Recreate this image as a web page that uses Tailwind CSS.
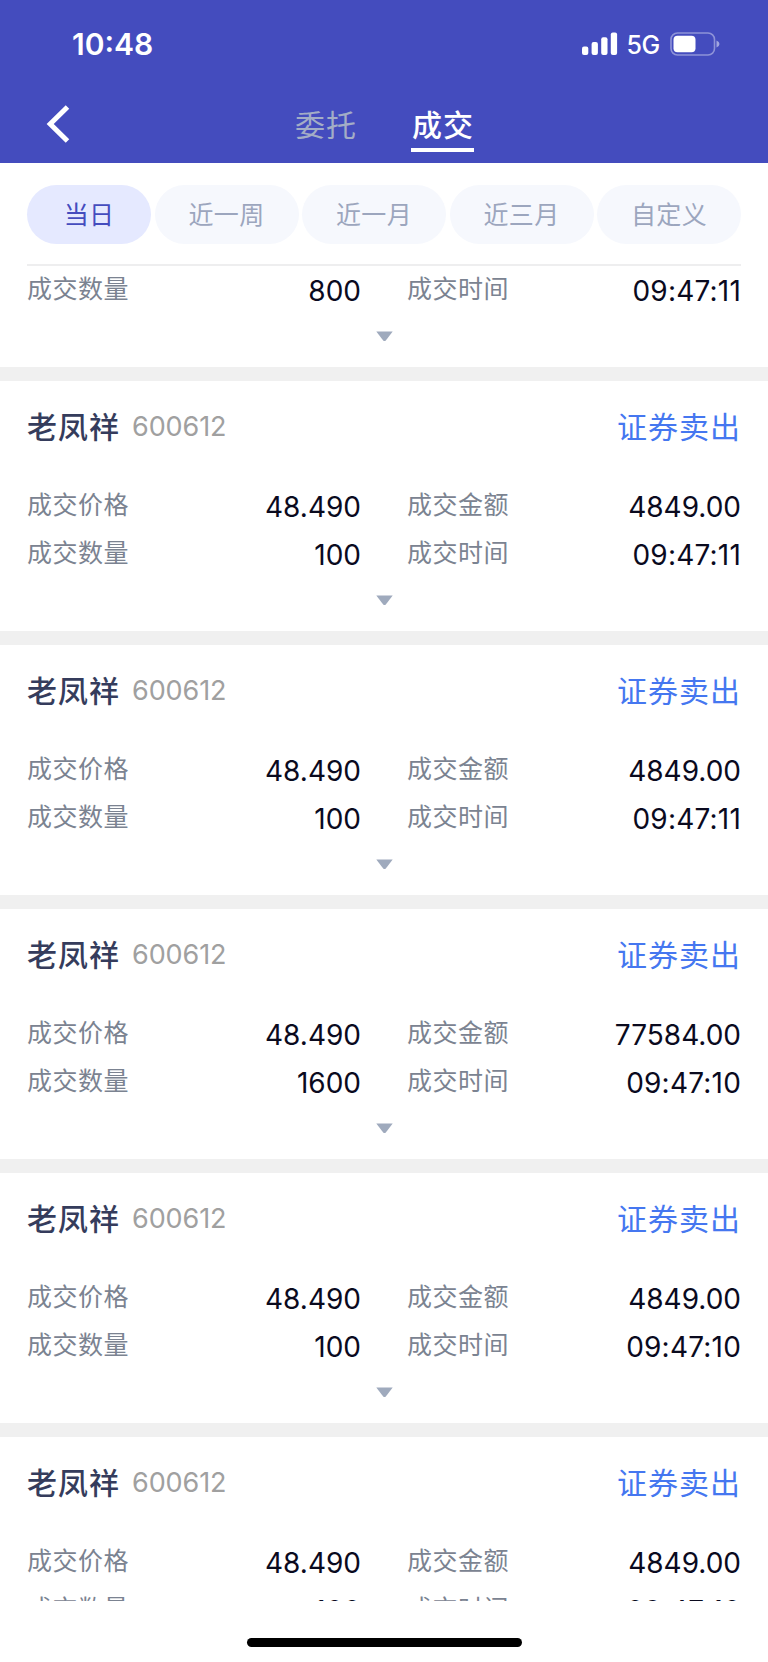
<!DOCTYPE html>
<html lang="zh-CN">
<head>
<meta charset="utf-8">
<title>成交</title>
<script src="https://cdn.jsdelivr.net/npm/@tailwindcss/browser@4"></script>
</head>
<body class="bg-white">
<div class="flex h-[1662px] w-[768px] flex-col overflow-hidden bg-white font-['Inter','Noto_Sans_CJK_SC',sans-serif]">
  <header class="h-[163px] shrink-0 bg-[#444cbe] text-white">
    <div class="flex h-[87px] items-center pl-[72px] pr-[48px]">
      <span class="text-[30px] font-semibold leading-none">10:48</span>
      <svg class="ml-auto" width="36" height="24" viewBox="0 0 36 24" fill="#fff"><rect x="0" y="14.5" width="6.3" height="8.5" rx="2"/><rect x="9.6" y="10" width="6.3" height="13" rx="2"/><rect x="19.2" y="5.2" width="6.3" height="17.8" rx="2"/><rect x="28.8" y="0.4" width="6.3" height="22.6" rx="2"/></svg>
      <span class="ml-[8px] mt-[3px] text-[25px] font-medium leading-none tracking-[-0.3px]">5G</span>
      <svg class="ml-[10px]" width="50" height="24" viewBox="0 0 50 24"><rect x="1" y="1" width="43.5" height="22" rx="6.5" fill="none" stroke="#fff" stroke-opacity=".4" stroke-width="1.6"/><rect x="3.5" y="3.7" width="22" height="16.6" rx="4" fill="#fff"/><path d="M46.5 8.5q3 1.2 3 3.5t-3 3.5z" fill="#fff" fill-opacity=".5"/></svg>
    </div>
    <nav class="flex h-[76px] items-start text-[30px] leading-[44px]">
      <svg class="ml-[46px] mt-[17px]" width="24" height="40" viewBox="0 0 24 40" fill="none" stroke="#fff" stroke-width="5"><path d="M21.5 3L4.2 20 21.5 37"/></svg>
      <span class="ml-[225px] mt-[16px] tracking-[1px] text-[#a3adc6]">委托</span>
      <span class="ml-[54px] mt-[16px] h-[49px] w-[63px] border-b-[4px] border-white pl-[1px] font-medium tracking-[1px]">成交</span>
    </nav>
  </header>
  <div class="mx-[27px] flex h-[103px] shrink-0 justify-between border-b-2 border-[#eeeeef] pt-[22px] text-[25px] text-[#9ca6be]">
    <span class="flex h-[59px] w-[124px] items-center justify-center rounded-full bg-[#e5e9ff] pt-[2px] tracking-[0.3px] text-[#444cbe]">当日</span>
    <span class="flex h-[59px] w-[144px] items-center justify-center rounded-full bg-[#f6f8fd] pt-[2px] tracking-[0.3px]">近一周</span>
    <span class="flex h-[59px] w-[144px] items-center justify-center rounded-full bg-[#f6f8fd] pt-[2px] tracking-[0.3px]">近一月</span>
    <span class="flex h-[59px] w-[144px] items-center justify-center rounded-full bg-[#f6f8fd] pt-[2px] tracking-[0.3px]">近三月</span>
    <span class="flex h-[59px] w-[144px] items-center justify-center rounded-full bg-[#f6f8fd] pt-[2px] tracking-[0.3px]">自定义</span>
  </div>
  <main id="list" class="h-[1335px] shrink-0 overflow-hidden"></main>
  <div class="flex grow justify-center pt-[37px]"><div class="h-[9px] w-[275px] rounded-full bg-black"></div></div>
</div>
<script>
const row = (a, b, c, d) => `
  <div class="flex h-12 items-center px-[27px]">
    <span class="w-[130px] text-[25px] leading-[48px] tracking-[0.5px] text-[#7b8391]">${a}</span>
    <span class="w-[204px] pt-[5px] text-right text-[28px] leading-[43px] text-[#0a0a1e]">${b}</span>
    <span class="ml-[46px] w-[130px] text-[25px] leading-[48px] tracking-[0.5px] text-[#7b8391]">${c}</span>
    <span class="grow pt-[5px] text-right text-[28px] leading-[43px] text-[#0a0a1e]${d.includes(':') ? ' tracking-[0.2px]' : ''}">${d}</span>
  </div>`;
const foot = `
  <div class="flex h-[54px] justify-center pt-[18px]"><svg width="17" height="11" viewBox="0 0 17 11"><path d="M0.3 0.5H16.7L10 9.2Q8.5 11 7 9.2Z" fill="#9faabd"/></svg></div>
  <div class="h-[14px] bg-[#f0f0f0]"></div>`;
const card = (qty, amount, time) => `
  <section class="h-[264px] pt-[22px]">
    <div class="mb-[30px] flex h-12 items-center px-[27px]">
      <span class="text-[30px] font-medium tracking-[1px] text-[#353c5c]">老凤祥</span>
      <span class="ml-[12px] text-[27px] tracking-[-0.1px] text-[#a0a0a0]">600612</span>
      <span class="ml-auto text-[30px] tracking-[1px] text-[#4577f0]">证券卖出</span>
    </div>
    ${row('成交价格', '48.490', '成交金额', amount)}
    ${row('成交数量', qty, '成交时间', time)}
    ${foot}
  </section>`;
document.getElementById('list').innerHTML =
  `<section class="-mt-px h-[116px]">${row('成交数量', '800', '成交时间', '09:47:11')}${foot}</section>` +
  card('100', '4849.00', '09:47:11') +
  card('100', '4849.00', '09:47:11') +
  card('1600', '77584.00', '09:47:10') +
  card('100', '4849.00', '09:47:10') +
  card('100', '4849.00', '09:47:10');
</script>
</body>
</html>
